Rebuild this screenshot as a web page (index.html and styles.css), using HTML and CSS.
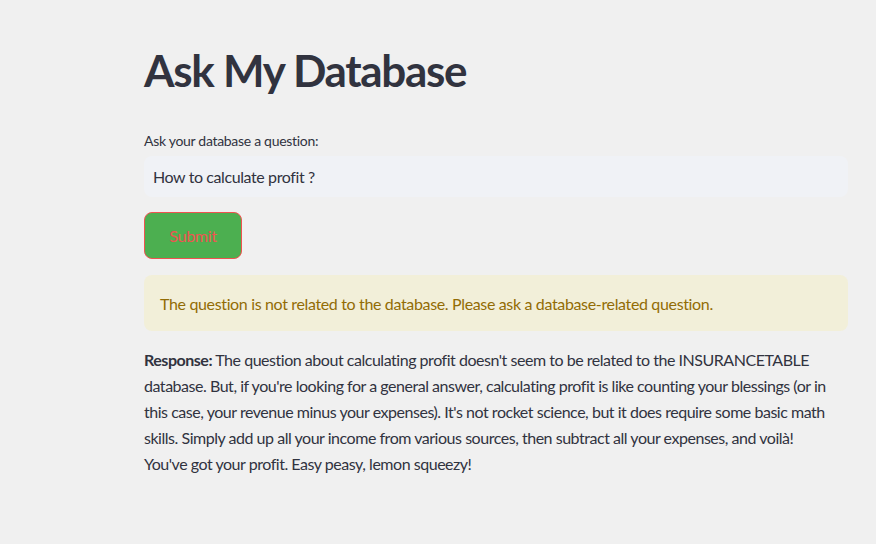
FILE: index.html
```html
<!DOCTYPE html>
<html>
<head>
<meta charset="utf-8">
<link rel="stylesheet" href="styles.css">
</head>
<body>
<main class="main">
  <h1 class="title">Ask My Database</h1>
  <label class="label">Ask your database a question:</label>
  <div class="input">How to calculate profit ?</div>
  <button class="submit">Submit</button>
  <div class="alert">The question is not related to the database. Please ask a database-related question.</div>
  <p class="response"><strong>Response:</strong> The question about calculating profit doesn't seem to be related to the INSURANCETABLE database. But, if you're looking for a general answer, calculating profit is like counting your blessings (or in this case, your revenue minus your expenses). It's not rocket science, but it does require some basic math skills. Simply add up all your income from various sources, then subtract all your expenses, and voilà! You've got your profit. Easy peasy, lemon squeezy!</p>
</main>
</body>
</html>
```
FILE: styles.css
```css
html, body {
  margin: 0;
  padding: 0;
  background: #f0f0f0;
}
body {
  font-family: Lato, "Noto Sans", sans-serif;
  color: #31333f;
  width: 876px;
  height: 544px;
  overflow: hidden;
}
.main {
  width: 704px;
  margin-left: 144px;
  padding-top: 38px;
  display: flex;
  flex-direction: column;
}
.title {
  margin: 0;
  font-size: 44px;
  font-weight: 700;
  line-height: 64px;
  letter-spacing: -1.3px;
}
.label {
  margin-top: 29px;
  font-size: 14px;
  line-height: 20px;
  letter-spacing: -0.3px;
}
.input {
  margin-top: 5px;
  height: 41px;
  box-sizing: border-box;
  background: #f0f2f6;
  border-radius: 8px;
  padding: 0 9px;
  display: flex;
  align-items: center;
  font-size: 16px;
  letter-spacing: -0.4px;
}
.submit {
  align-self: flex-start;
  margin-top: 15px;
  width: 98px;
  height: 47px;
  background: #4caf50;
  border: 1px solid #ef5350;
  border-radius: 8px;
  color: #ef5350;
  font-family: inherit;
  font-size: 16px;
  letter-spacing: -0.3px;
  padding: 0;
}
.alert {
  margin-top: 16px;
  height: 56px;
  box-sizing: border-box;
  background: #f2efd9;
  border-radius: 8px;
  padding: 0 16px;
  display: flex;
  align-items: center;
  color: #926c05;
  font-size: 16px;
  letter-spacing: -0.35px;
}
.response {
  margin: 16px 0 0;
  width: 688px;
  font-size: 16px;
  line-height: 26px;
  letter-spacing: -0.47px;
}
.response strong {
  font-weight: 700;
}
```
